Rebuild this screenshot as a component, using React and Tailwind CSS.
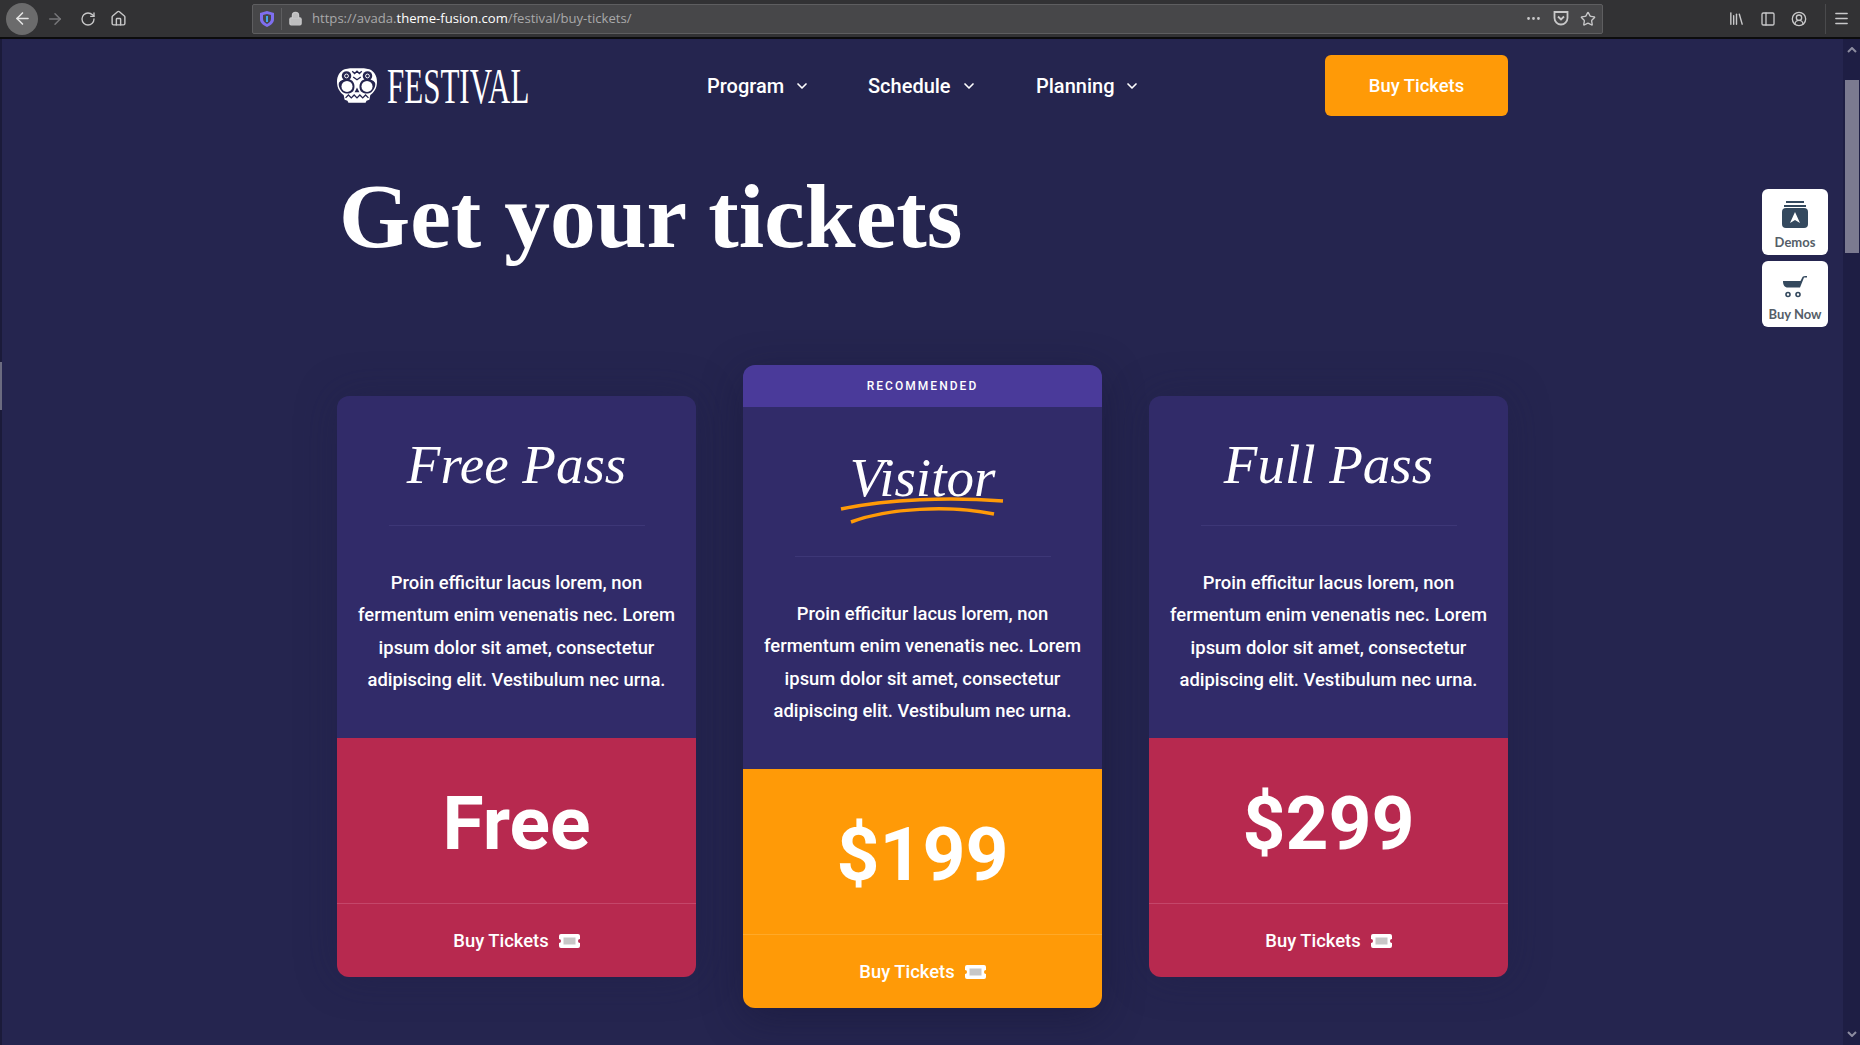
import { ChevronDown, ArrowLeft, ArrowRight, RotateCw, Home, Lock, Star, MoreHorizontal, Library, PanelLeft, CircleUserRound, Menu } from "lucide-react";

const sans = "font-['Roboto','Liberation_Sans',sans-serif]";

const blurb = [
  "Proin efficitur lacus lorem, non",
  "fermentum enim venenatis nec. Lorem",
  "ipsum dolor sit amet, consectetur",
  "adipiscing elit. Vestibulum nec urna.",
];

function TicketIcon() {
  return (
    <svg width="21" height="14" viewBox="0 0 21 14" fill="#fff">
      <path d="M2 0h17a2 2 0 0 1 2 2v3a2 2 0 0 0 0 4v3a2 2 0 0 1-2 2H2a2 2 0 0 1-2-2V9a2 2 0 0 0 0-4V2a2 2 0 0 1 2-2z" />
      <rect x="4.500" y="3.500" width="12" height="7" fill="#000" opacity="0.22" />
    </svg>
  );
}

function Skull() {
  return (
    <svg width="40" height="35" viewBox="0 0 42 36" className="shrink-0">
      <path fill="#fff" d="M21 0c6 0 9 0 13 1 5 2 8 7 8 13 0 7-3 11-7 14l-1 5-3 1-1 2H12l-1-2-3-1-1-5C3 25 0 21 0 14 0 8 3 3 8 1c4-1 7-1 13-1z" />
      <circle cx="10" cy="8" r="5" fill="#25254f" />
      <circle cx="32" cy="8" r="5" fill="#25254f" />
      <circle cx="10" cy="8" r="2" fill="none" stroke="#fff" strokeWidth="1" />
      <circle cx="32" cy="8" r="2" fill="none" stroke="#fff" strokeWidth="1" />
      <path fill="none" stroke="#25254f" strokeWidth="1.400" d="M16 3l2.500 2.500L21 3l2.500 2.500L26 3M17 9l4 3 4-3" />
      <path fill="#25254f" d="M2 15c3-4 10-5 14-2 3 3 3 8 1 11-3 3-8 3-11 1-2-2-5-6-4-10zM40 15c-3-4-10-5-14-2-3 3-3 8-1 11 3 3 8 3 11 1 2-2 5-6 4-10z" />
      <circle cx="10.500" cy="19" r="5.800" fill="#fff" />
      <circle cx="31.500" cy="19" r="5.800" fill="#fff" />
      <path fill="none" stroke="#25254f" strokeWidth="1.400" d="M9 31l3-3 3 3 3-3 3 3 3-3 3 3 3-3 3 3" />
      <path fill="#25254f" d="M21 20l2.500 5h-5z" />
    </svg>
  );
}

function Logo() {
  return (
    <div className="flex items-center gap-[10px] w-[193px] shrink-0">
      <Skull />
      <span className="w-[143px] font-['Liberation_Serif',serif] text-[50px] leading-none text-white inline-block origin-left scale-x-[0.62] whitespace-nowrap">
        FESTIVAL
      </span>
    </div>
  );
}

function NavItem({ label, width }) {
  return (
    <div className={`flex items-center gap-[10px] text-white text-[20px] font-medium ${width}`}>
      {label}
      <ChevronDown size={16} strokeWidth={2.5} />
    </div>
  );
}

function Toolbar() {
  return (
    <div className="h-[39px] bg-[#323234] border-b-2 border-[#0c0c0d] flex items-center text-[#c8c8c9] shrink-0">
      <div className="w-[252px] flex items-center pl-[6px] shrink-0">
        <div className="w-[32px] h-[32px] rounded-full bg-[#6b6b6c] flex items-center justify-center">
          <ArrowLeft size={19} color="#e4e4e4" />
        </div>
        <ArrowRight size={18} color="#77777a" className="ml-[8px]" />
        <RotateCw size={16} className="ml-[16px]" />
        <Home size={17} className="ml-[14px]" />
      </div>
      <div className="w-[1351px] h-[30px] bg-[#474749] border border-[#5e5e60] rounded-[2px] flex items-center shrink-0">
        <svg width="14" height="16" viewBox="0 0 14 16" className="ml-[7px]">
          <path d="M7 0l7 2v6c0 4-3 6-7 8-4-2-7-4-7-8V2z" fill="#7f6ff0" />
          <path d="M7 3l4 1v4c0 2-2 4-4 5-2-1-4-3-4-5V4z" fill="#474749" />
          <rect x="6" y="5" width="2" height="6" fill="#3fa7ee" />
        </svg>
        <div className="w-px h-[22px] bg-[#5e5e60] ml-[7px]" />
        <Lock size={15} fill="#bdbdbe" strokeWidth={2} className="ml-[6px]" />
        <div className="ml-[9px] text-[13.100px] text-[#a9a9aa] font-['Open_Sans',sans-serif]">
          https://avada.<span className="text-white">theme-fusion.com</span>/festival/buy-tickets/
        </div>
        <div className="ml-auto flex items-center gap-[11px] pr-[6px]">
          <MoreHorizontal size={17} />
          <svg width="16" height="15" viewBox="0 0 16 15" fill="none" stroke="#c8c8c9" strokeWidth="1.800">
            <path d="M1.500 1h13v6c0 3.500-3 6.500-6.500 6.500S1.500 10.500 1.500 7z" />
            <path d="M5 5.500l3 3 3-3" />
          </svg>
          <Star size={16} strokeWidth={2} />
        </div>
      </div>
      <div className="flex items-center pl-[125px] gap-[15px]">
        <Library size={17} />
        <PanelLeft size={16} />
        <CircleUserRound size={16} />
        <div className="w-px h-[30px] bg-[#4a4a4c] ml-[3px]" />
        <Menu size={17} className="ml-[-8px]" />
      </div>
    </div>
  );
}

function Scrollbar() {
  return (
    <div className="w-[17px] bg-[#1e1e44] flex flex-col items-center shrink-0">
      <svg width="10" height="6" viewBox="0 0 10 6" className="mt-[8px]" fill="none" stroke="#8c8ca0" strokeWidth="2">
        <path d="M1 5l4-4 4 4" />
      </svg>
      <div className="w-[14px] h-[173px] bg-[#7b7a90] mt-[27px] ml-[1px]" />
      <svg width="10" height="6" viewBox="0 0 10 6" className="mt-auto mb-[8px]" fill="none" stroke="#8c8ca0" strokeWidth="2">
        <path d="M1 1l4 4 4-4" />
      </svg>
    </div>
  );
}

function SideButton({ label, gap, children }) {
  return (
    <div className="w-[66px] h-[66px] bg-white rounded-[6px] flex flex-col items-center justify-end pb-[5px]">
      {children}
      <div className={`text-[13px] leading-[16px] font-bold text-[#555e68] font-['Lato',sans-serif] whitespace-nowrap ${gap}`}>{label}</div>
    </div>
  );
}

function Card({ title, price, color, line, featured }) {
  return (
    <div className={`w-[359px] rounded-[12px] overflow-hidden text-white ${featured ? "shadow-[0_10px_40px_rgba(20,20,50,0.45)]" : "shadow-[0_0_40px_rgba(30,30,70,0.35)]"}`}>
      {featured && (
        <div className="h-[42px] bg-[#4a3a9a] flex items-center justify-center text-[12px] font-medium tracking-[0.17em]">
          RECOMMENDED
        </div>
      )}
      <div className={`bg-[#312b69] ${featured ? "h-[362px]" : "h-[342px]"} flex flex-col items-center`}>
        <div className={`relative ${featured ? "h-[150px] pt-[41px]" : "h-[130px] pt-[39px]"} w-[256px] border-b border-[#3d3777] text-center`}>
          <div className="font-['Liberation_Serif',serif] italic text-[55px] leading-[60px] whitespace-nowrap">{title}</div>
          {featured && (
            <svg width="166" height="28" viewBox="0 0 166 28" className="absolute left-[44px] top-[89px]" fill="none" stroke="#ff9a07" strokeWidth="3.500">
              <path d="M2 13C50 3 110 1 164 5" />
              <path d="M12 26C50 12 110 9 155 18" />
            </svg>
          )}
        </div>
        <div className="mt-[41px] text-[18.400px] leading-[32.4px] font-medium text-center">
          {blurb.map((t) => (
            <div key={t} className="whitespace-nowrap">{t}</div>
          ))}
        </div>
      </div>
      <div className={color}>
        <div className={`h-[166px] flex items-center justify-center border-b ${line} text-[75px] font-bold pt-[5px]`}>
          {price}
        </div>
        <div className="h-[73px] flex items-center justify-center gap-[10px] text-[18.400px] font-medium">
          Buy Tickets
          <TicketIcon />
        </div>
      </div>
    </div>
  );
}

export default function App() {
  return (
    <div className={`h-screen overflow-hidden flex flex-col bg-[#25254f] ${sans}`}>
      <Toolbar />
      <div className="flex-1 flex min-h-0 relative">
        <div className="flex-1 pl-[337px] border-l-2 border-[#1b1b3a]">
          <div className="w-[1171px] -ml-[2px]">
            <header className="flex items-center h-[61px] mt-[16px]">
              <Logo />
              <nav className="flex items-center ml-[177px]">
                <NavItem label="Program" width="w-[161px]" />
                <NavItem label="Schedule" width="w-[168px]" />
                <NavItem label="Planning" />
              </nav>
              <div className="ml-auto w-[183px] h-[61px] bg-[#ff9a07] rounded-[6px] flex items-center justify-center text-white text-[18.400px] font-medium pt-[1px]">
                Buy Tickets
              </div>
            </header>
            <h1 className="font-['Liberation_Serif',serif] font-bold text-[91.500px] leading-[100px] text-white mt-[50px] ml-[2px]">
              Get your tickets
            </h1>
            <div className="flex items-center justify-between mt-[99px]">
              <Card title="Free Pass" price="Free" color="bg-[#b7294f]" line="border-[#c4466a]" />
              <Card title="Visitor" price="$199" color="bg-[#ff9a07]" line="border-[#ffa928]" featured />
              <Card title="Full Pass" price="$299" color="bg-[#b7294f]" line="border-[#c4466a]" />
            </div>
          </div>
        </div>
        <Scrollbar />
        <div className="absolute right-[32px] top-[150px] flex flex-col gap-[6px]">
          <SideButton label="Demos" gap="mt-[3px]">
            <svg width="26" height="30" viewBox="0 0 26 30" fill="#34495e">
              <rect x="4" y="0" width="18" height="2" />
              <rect x="2" y="4" width="22" height="2" />
              <rect x="0" y="7" width="26" height="20" rx="4" />
              <path d="M13 11l5 11-5-3-5 3z" fill="#fff" />
            </svg>
          </SideButton>
          <SideButton label="Buy Now" gap="mt-[8px]">
            <svg width="24" height="22" viewBox="0 0 24 22" fill="#34495e">
              <path d="M0 5h17.500l2-4c.5-1 2-1 4.500-1v1.500h-3l-4 10H5C1.500 11.500 0 9 0 5z" />
              <circle cx="5" cy="18.500" r="2" fill="none" stroke="#34495e" strokeWidth="1.600" />
              <circle cx="15" cy="18.500" r="2" fill="none" stroke="#34495e" strokeWidth="1.600" />
            </svg>
          </SideButton>
        </div>
        <div className="absolute left-0 top-[323px] w-[2px] h-[48px] bg-[#6b6b80]" />
      </div>
    </div>
  );
}
